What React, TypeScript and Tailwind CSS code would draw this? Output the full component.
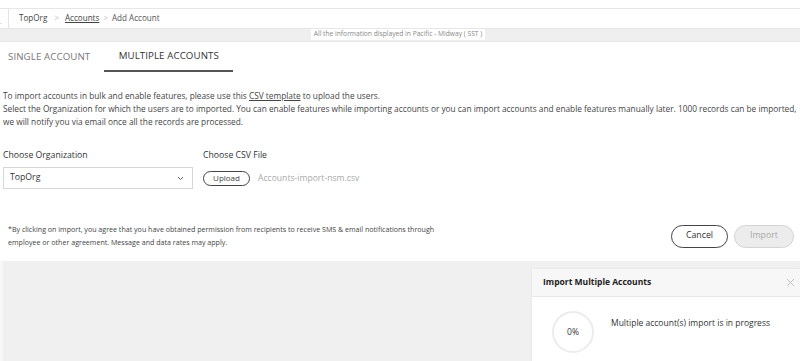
import React from "react";

export default function App() {
  return (
    <div
      className="w-[800px] h-[361px] overflow-hidden bg-white text-[#333]"
      style={{ fontFamily: '"Open Sans", "Liberation Sans", sans-serif' }}
    >
      {/* top strip */}
      <div className="h-[9px] border-b border-[#e6e6e6]" />
      {/* breadcrumb */}
      <div className="flex h-[19px] items-center">
        <div className="w-[9px] h-full border-r border-[#e3e3e3] flex items-end pb-[3px]">
          <span className="text-[6px] leading-none text-[#666]">.</span>
        </div>
        <div className="flex items-center pl-[10px] text-[8.1px] text-[#444]">
          <span>TopOrg</span>
          <span className="ml-[7px] mr-[6px] text-[#c4c4c4]">&gt;</span>
          <span className="underline">Accounts</span>
          <span className="mx-[4px] text-[#c4c4c4]">&gt;</span>
          <span className="text-[#555]">Add Account</span>
        </div>
      </div>
      {/* timezone bar */}
      <div className="h-[14px] bg-[#efefef] border-y border-[#e6e6e6] flex justify-center">
        <div className="bg-white px-[3px] h-[11px] flex items-center text-[6.7px] text-[#888] leading-none -ml-[4px]">
          All the information displayed in Pacific - Midway ( SST )
        </div>
      </div>
      {/* tabs */}
      <div className="flex h-[30px] items-stretch">
        <div className="pl-[8px] pr-[14px] pt-[1px] flex items-center text-[9.7px] text-[#777] tracking-[0.1px]">
          SINGLE ACCOUNT
        </div>
        <div className="w-[129px] pt-[1px] flex items-center justify-center text-[9.7px] text-[#333] border-b-2 border-[#555] tracking-[0.1px]">
          MULTIPLE ACCOUNTS
        </div>
      </div>
      {/* description */}
      <div className="pl-[3px] pt-[17px] text-[8.3px] leading-[13px] text-[#444]">
        <div>
          To import accounts in bulk and enable features, please use this{" "}
          <span className="underline">CSV template</span> to upload the users.
        </div>
        <div className="whitespace-nowrap">
          Select the Organization for which the users are to imported. You can enable features while importing accounts or you can import accounts and enable features manually later. 1000 records can be imported,
        </div>
        <div>we will notify you via email once all the records are processed.</div>
      </div>
      {/* form */}
      <div className="flex pl-[3px] pt-[20px]">
        <div className="w-[200px]">
          <div className="text-[8.7px] text-[#333] h-[14px] leading-[14px]">Choose Organization</div>
          <div className="mt-[5px] w-[190px] h-[22px] border border-[#d6d6d6] flex items-center justify-between pl-[6px] pr-[8px]">
            <span className="text-[8.7px] text-[#333]">TopOrg</span>
            <svg width="7" height="5" viewBox="0 0 7 5">
              <path d="M1 1 L3.5 3.5 L6 1" fill="none" stroke="#666" strokeWidth="1" />
            </svg>
          </div>
        </div>
        <div>
          <div className="text-[8.7px] text-[#333] h-[14px] leading-[14px]">Choose CSV File</div>
          <div className="mt-[5px] h-[22px] flex items-center">
            <div className="h-[15px] w-[47px] rounded-full border border-[#444] flex items-center justify-center text-[8px] text-[#444]">
              Upload
            </div>
            <span className="ml-[8px] text-[8.6px] text-[#aaa]">Accounts-import-nsm.csv</span>
          </div>
        </div>
      </div>
      {/* disclaimer + buttons */}
      <div className="flex justify-between items-center pl-[8px] pr-[6px] pt-[34px] pb-[12px]">
        <div className="text-[7.1px] leading-[13px] text-[#444] w-[440px]">
          *By clicking on import, you agree that you have obtained permission from recipients to receive SMS &amp; email notifications through employee or other agreement. Message and data rates may apply.
        </div>
        <div className="flex gap-[6px]">
          <div className="w-[57px] h-[23px] rounded-full border border-[#444] flex items-center justify-center text-[8.8px] text-[#333]">
            Cancel
          </div>
          <div className="w-[60px] h-[23px] rounded-full border border-[#d4d4d4] bg-[#ececec] flex items-center justify-center text-[8.8px] text-[#aaa]">
            Import
          </div>
        </div>
      </div>
      {/* gray area */}
      <div className="h-[110px] bg-[#f0f0f0] border-l-[3px] border-[#f7f7f7] flex justify-end pt-[8px]">
        <div className="w-[268px] bg-white shadow-[0_0_2px_rgba(0,0,0,0.08)]">
          <div className="h-[28px] bg-[#f7f7f7] border-b border-[#e8e8e8] flex items-center justify-between pl-[11px] pr-[5px]">
            <span className="text-[8.5px] font-bold text-[#222]">Import Multiple Accounts</span>
            <svg width="9" height="9" viewBox="0 0 9 9">
              <path d="M1 1 L8 8 M8 1 L1 8" stroke="#bbb" strokeWidth="0.9" />
            </svg>
          </div>
          <div className="flex pl-[20px] pt-[14px]">
            <div className="w-[42px] h-[42px] rounded-full border-[2px] border-[#ececec] flex items-center justify-center text-[8.5px] text-[#333]">
              0%
            </div>
            <div className="ml-[17px] pt-[6px] text-[8.5px] text-[#333]">
              Multiple account(s) import is in progress
            </div>
          </div>
        </div>
      </div>
    </div>
  );
}
